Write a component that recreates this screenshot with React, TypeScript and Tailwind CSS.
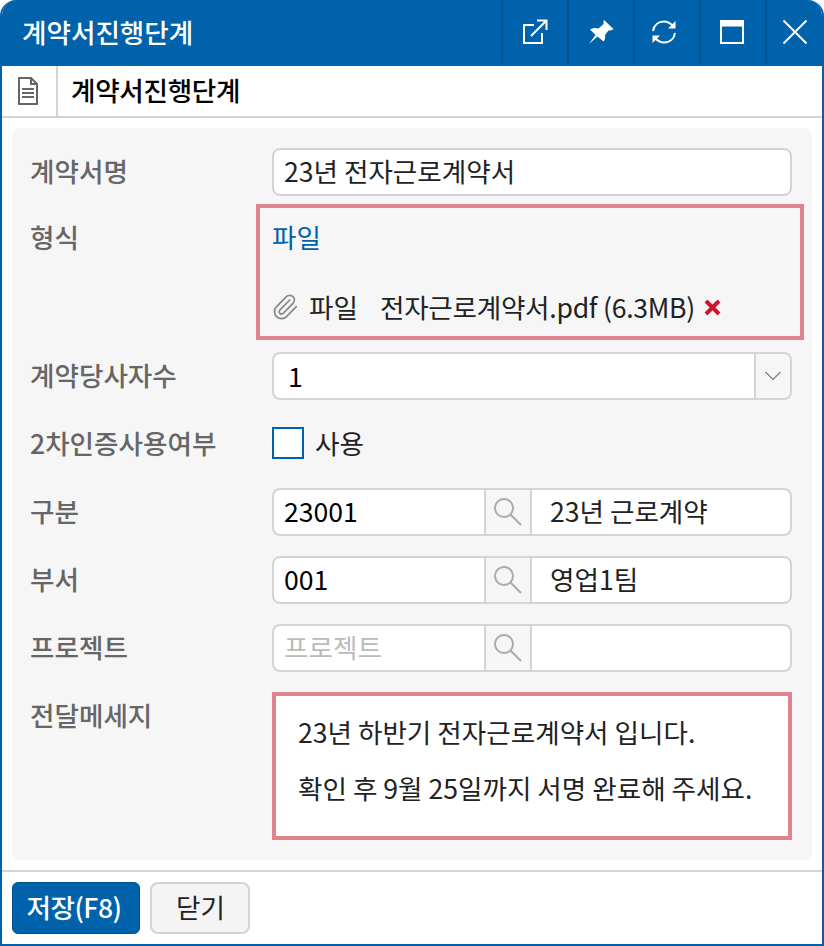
import React from 'react';
import { Paperclip } from 'lucide-react';

const SearchIcon = () => (
  <svg width="30" height="30" viewBox="0 0 30 30" fill="none" stroke="#aaaaaa" strokeWidth="2">
    <circle cx="11" cy="11" r="9" />
    <path d="M17.5 17.5 L28 28" />
  </svg>
);

function Row({ label, children, labelClass = '' }: { label: string; children: React.ReactNode; labelClass?: string }) {
  return (
    <div className="flex">
      <div className={`w-[258px] shrink-0 pl-[16px] leading-[46px] font-medium text-[#666666] ${labelClass}`}>{label}</div>
      <div className="min-w-0 flex-1">{children}</div>
    </div>
  );
}

function LookupField({ code, name, placeholder }: { code?: string; name?: string; placeholder?: string }) {
  return (
    <div className="flex h-[48px] overflow-hidden rounded-lg border-2 border-[#d4d4d4] bg-white">
      <div className={`w-[210px] pl-[10px] leading-[42px] ${placeholder ? 'text-[#bbbbbb]' : 'text-black'}`}>{code ?? placeholder}</div>
      <div className="flex w-[48px] items-center justify-center border-x-2 border-[#d4d4d4] bg-[#f6f6f6]">
        <SearchIcon />
      </div>
      <div className="flex-1 pl-[18px] leading-[42px] text-[#222222]">{name}</div>
    </div>
  );
}

function HeaderButton({ children, last }: { children: React.ReactNode; last?: boolean }) {
  return (
    <div className={`flex h-[64px] items-center justify-center border-l-2 border-[#00548f] ${last ? 'w-[57px]' : 'w-[66px]'}`}>
      {children}
    </div>
  );
}

export default function App() {
  return (
    <div
      className="flex h-[946px] w-[824px] flex-col overflow-hidden rounded-t-2xl border-2 border-t-0 border-[#0062ab] bg-white text-[26.6px] text-[#222222]"
      style={{ fontFamily: '"Noto Sans CJK KR", "Noto Sans", sans-serif' }}
    >
      <div className="flex h-[66px] shrink-0 items-start justify-between bg-[#0062ab] pl-[20px]">
        <div className="leading-[64px] font-medium text-white">계약서진행단계</div>
        <div className="flex">
          <HeaderButton>
            <svg width="28" height="28" viewBox="0 0 28 28" fill="none" stroke="white" strokeWidth="2">
              <path d="M13 7 H3 V25 H21 V15" />
              <path d="M10 18 L25 3 M16 2.5 H25.5 V12" />
            </svg>
          </HeaderButton>
          <HeaderButton>
            <svg width="25" height="25" viewBox="0 0 25 25" fill="white">
              <path d="M15 0 L24.500 9 C23 10.500 21 10.500 19.500 10.500 L16 15 C16.500 18 16 20 14.500 21.500 L8.500 16.500 L0 24 L6.500 15 L1 9.500 C3.500 8 6.500 7.500 9.500 8.500 L14.500 4 C14.500 2.500 14.500 1 15 0Z" />
            </svg>
          </HeaderButton>
          <HeaderButton>
            <svg className="mr-[6px]" width="28" height="28" viewBox="0 0 28 28" fill="none" stroke="white" strokeWidth="2">
              <path d="M3 13 C4 7 8.5 3.5 14 3.5 C18 3.5 20.5 5.5 22.5 7.5" />
              <path d="M25 15 C24 21 19.5 24.5 14 24.5 C10 24.5 7.500 22.500 5.500 20.500" />
              <path d="M25.500 3 V10.500 H18 Z" fill="white" stroke="none" />
              <path d="M2.500 25 V17.500 H10 Z" fill="white" stroke="none" />
            </svg>
          </HeaderButton>
          <HeaderButton>
            <svg className="mr-[2px]" width="24" height="24" viewBox="0 0 24 24" fill="none" stroke="white" strokeWidth="2">
              <rect x="1" y="1" width="22" height="22" />
              <path d="M1 4 H23" strokeWidth="5" />
            </svg>
          </HeaderButton>
          <HeaderButton last>
            <svg width="26" height="26" viewBox="0 0 26 26" fill="none" stroke="white" strokeWidth="2">
              <path d="M1.500 1.500 L24.500 24.500 M24.500 1.500 L1.500 24.500" />
            </svg>
          </HeaderButton>
        </div>
      </div>

      <div className="flex h-[52px] shrink-0 items-stretch border-b-2 border-[#d4d4d4]">
        <div className="flex w-[56px] items-center justify-center border-r-2 border-[#d4d4d4] pr-[2px]">
          <svg width="20" height="28" viewBox="0 0 20 28" fill="none" stroke="#666666" strokeWidth="2">
            <path d="M1 1 H13 L19 7 V27 H1 Z" />
            <path d="M13 1 V7 H19" />
            <path d="M4 12 H16 M4 16 H16 M4 20 H16" />
          </svg>
        </div>
        <div className="pl-[13px] leading-[48px] font-medium tracking-[-0.3px] text-black">계약서진행단계</div>
      </div>

      <div className="flex-1 p-[10px]">
        <div className="h-full rounded-lg bg-[#f6f6f6] pt-[20px] pr-[20px] pb-[20px] pl-[2px]">
          <div className="flex flex-col">
            <Row label="계약서명">
              <div className="h-[48px] rounded-lg border-2 border-[#d4d4d4] bg-white pl-[10px] leading-[42px]">23년 전자근로계약서</div>
            </Row>

            <div className="mt-[8px]">
              <Row label="형식" labelClass="pt-[10px]">
                <div className="mr-[-12px] ml-[-16px] h-[136px] border-4 border-[#e0838c] pl-[12px]">
                  <div className="pt-[5px] leading-[48px] text-[#0062ab]">파일</div>
                  <div className="mt-[22px] flex items-center leading-[48px]">
                    <Paperclip className="ml-[-1px] h-[28px] w-[28px] text-[#888888]" strokeWidth={1.5} />
                    <span className="ml-[10px]">파일</span>
                    <span className="ml-[22px] tracking-[-0.27px]">전자근로계약서.pdf (6.3MB)</span>
                    <svg className="ml-[9px]" width="17" height="17" viewBox="0 0 17 17" fill="none" stroke="#d0142c" strokeWidth="4">
                      <path d="M2 2 L15 15 M15 2 L2 15" />
                    </svg>
                  </div>
                </div>
              </Row>
            </div>

            <div className="mt-[12px]">
              <Row label="계약당사자수">
                <div className="flex h-[48px] overflow-hidden rounded-lg border-2 border-[#d4d4d4] bg-white">
                  <div className="flex-1 pl-[14px] leading-[44px] text-black">1</div>
                  <div className="flex w-[36px] items-center justify-center border-l-2 border-[#d4d4d4] bg-[#f6f6f6]">
                    <svg width="18" height="12" viewBox="0 0 18 12" fill="none" stroke="#888888" strokeWidth="1.500">
                      <path d="M1.500 2 L9 9.500 L16.500 2" />
                    </svg>
                  </div>
                </div>
              </Row>
            </div>

            <div className="mt-[20px]">
              <Row label="2차인증사용여부">
                <div className="flex h-[46px] items-center">
                  <div className="h-[32px] w-[32px] border-2 border-[#0062ab] bg-white" />
                  <span className="ml-[11px]">사용</span>
                </div>
              </Row>
            </div>

            <div className="mt-[22px]">
              <Row label="구분">
                <LookupField code="23001" name="23년 근로계약" />
              </Row>
            </div>
            <div className="mt-[20px]">
              <Row label="부서">
                <LookupField code="001" name="영업1팀" />
              </Row>
            </div>
            <div className="mt-[20px]">
              <Row label="프로젝트">
                <LookupField placeholder="프로젝트" />
              </Row>
            </div>

            <div className="mt-[20px]">
              <Row label="전달메세지">
                <div className="h-[148px] border-4 border-[#e0838c] bg-white pt-[8px] pl-[22px] leading-[56px]">
                  <div>23년 하반기 전자근로계약서 입니다.</div>
                  <div>확인 후 9월 25일까지 서명 완료해 주세요.</div>
                </div>
              </Row>
            </div>
          </div>
        </div>
      </div>

      <div className="flex h-[74px] shrink-0 gap-[10px] border-t-2 border-[#d4d4d4] pt-[10px] pl-[10px]">
        <div className="h-[52px] w-[128px] rounded-md border border-[#00548f] bg-[#0062ab] pr-[4px] text-center leading-[48px] font-medium tracking-[-0.5px] text-white">저장(F8)</div>
        <div className="h-[52px] w-[100px] rounded-lg border-2 border-[#d4d4d4] bg-[#f4f4f4] pl-[1px] text-center leading-[46px] text-[#222222]">닫기</div>
      </div>
    </div>
  );
}
